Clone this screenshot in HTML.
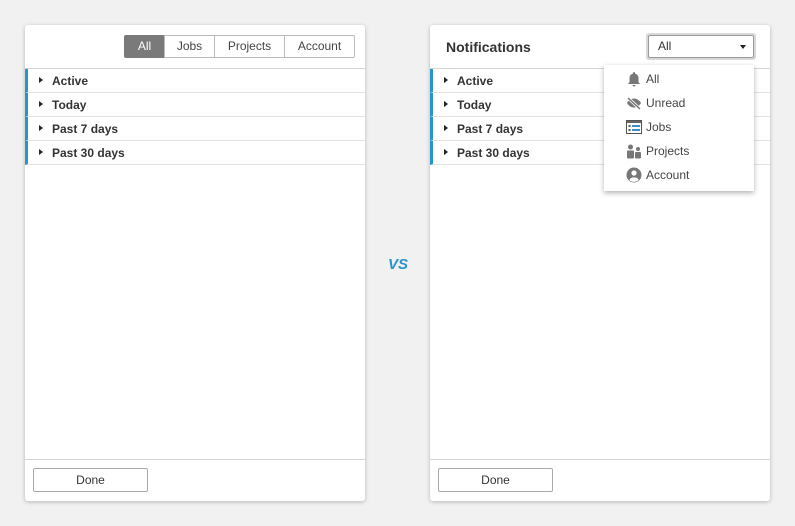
<!DOCTYPE html>
<html><head><style>
*{box-sizing:border-box;margin:0;padding:0}
body{width:795px;height:526px;background:#f1f1f1;font-family:"Liberation Sans",Arial,sans-serif;position:relative;overflow:hidden;color:#333}
.panel{position:absolute;top:25px;width:340px;height:476px;background:#fff;border-radius:3px;box-shadow:0 1px 4px rgba(0,0,0,.25)}
.hdr{height:44px;border-bottom:1px solid #d4d4d4;position:relative}
.row{height:24px;border-bottom:1px solid #e3e3e3;border-left:3px solid #2a93c9;font-size:12px;font-weight:bold;line-height:24px;padding-left:24px;position:relative;color:#333}
.row:before{content:"";position:absolute;left:11px;top:8px;border-left:4px solid #222;border-top:3.5px solid transparent;border-bottom:3.5px solid transparent}
.ftr{position:absolute;left:0;right:0;top:434px;border-top:1px solid #d4d4d4;height:42px}
.done{position:absolute;left:8px;top:8px;width:115px;height:24px;border:1px solid #aaa;border-radius:2px;font-size:12px;text-align:center;line-height:22px;color:#333}
.seg{position:absolute;top:10px;height:23px;border:1px solid #bbb;font-size:12px;text-align:center;line-height:21px;color:#444}
.dd{position:absolute;left:604px;top:65px;width:150px;height:126px;background:#fff;box-shadow:0 2px 5px rgba(0,0,0,.3);font-size:12px;color:#444}
.it{height:24px;line-height:24px;padding-left:42px;position:relative}
.it svg{position:absolute;left:22px;top:4px}
</style></head><body>
<div class="panel" style="left:25px">
 <div class="hdr">
  <div class="seg" style="left:99px;width:41px;background:#7a7a7a;border-color:#7a7a7a;color:#fff;border-radius:2px 0 0 2px">All</div>
  <div class="seg" style="left:139px;width:51px">Jobs</div>
  <div class="seg" style="left:189px;width:71px">Projects</div>
  <div class="seg" style="left:259px;width:71px;border-radius:0 2px 2px 0">Account</div>
 </div>
 <div class="row">Active</div><div class="row">Today</div><div class="row">Past 7 days</div><div class="row">Past 30 days</div>
 <div class="ftr"><div class="done">Done</div></div>
</div>
<div style="position:absolute;left:388px;top:256px;font-size:15px;font-weight:bold;font-style:italic;color:#2a93c9">VS</div>
<div class="panel" style="left:430px">
 <div class="hdr">
  <div style="position:absolute;left:16px;top:14px;font-size:14px;font-weight:bold;color:#333">Notifications</div>
  <div style="position:absolute;left:216px;top:8px;width:110px;height:27px;border-radius:3px;background:#d8d8d8"></div>
  <div style="position:absolute;left:218px;top:10px;width:106px;height:23px;border:1px solid #999;background:#fff;border-radius:2px;font-size:12px;line-height:21px;padding-left:9px">All<span style="position:absolute;right:7px;top:9px;border-top:4px solid #222;border-left:3.5px solid transparent;border-right:3.5px solid transparent"></span></div>
 </div>
 <div class="row">Active</div><div class="row">Today</div><div class="row">Past 7 days</div><div class="row">Past 30 days</div>
 <div class="ftr"><div class="done">Done</div></div>
</div>
<div class="dd">
 <div class="it" style="margin-top:2px"><svg width="16" height="16" viewBox="0 0 16 16"><path d="M8 1a1 1 0 011 1v.5A4.5 4.5 0 0112.5 7v4l1.5 2H2l1.5-2V7A4.5 4.5 0 017 2.5V2a1 1 0 011-1zM6.5 14h3a1.5 1.5 0 01-3 0z" fill="#777"/></svg>All</div>
 <div class="it"><svg width="16" height="16" viewBox="0 0 16 16"><path d="M1 8c2-3.5 5-4.5 7-4.5S13 4.5 15 8c-2 3.5-5 4.5-7 4.5S3 11.5 1 8z" fill="#777"/><path d="M2 3l12 11" stroke="#fff" stroke-width="3"/><path d="M2 3l12 11" stroke="#777" stroke-width="1.5"/></svg>Unread</div>
 <div class="it"><svg width="16" height="16" viewBox="0 0 16 16"><rect x="0.5" y="1.5" width="15" height="13" fill="#fff" stroke="#555"/><rect x="1" y="2" width="14" height="2" fill="#666"/><rect x="6" y="6" width="8" height="2" fill="#3a8fc9"/><rect x="6" y="10" width="8" height="2" fill="#3a8fc9"/><rect x="2.5" y="6" width="2" height="2" fill="#555"/><rect x="2.5" y="10" width="2" height="2" fill="#555"/></svg>Jobs</div>
 <div class="it"><svg width="16" height="16" viewBox="0 0 16 16"><circle cx="4.5" cy="4" r="2.5" fill="#777"/><rect x="1" y="7.5" width="7" height="8" rx="1" fill="#777"/><circle cx="12" cy="6" r="2" fill="#777"/><rect x="9" y="9" width="6" height="6.5" rx="1" fill="#777"/></svg>Projects</div>
 <div class="it"><svg width="16" height="16" viewBox="0 0 16 16"><circle cx="8" cy="8" r="7.5" fill="#777"/><circle cx="8" cy="6" r="2.6" fill="#fff"/><path d="M3.3 13a5 4 0 019.4 0A7 7 0 013.3 13z" fill="#fff"/></svg>Account</div>
</div>
</body></html>
